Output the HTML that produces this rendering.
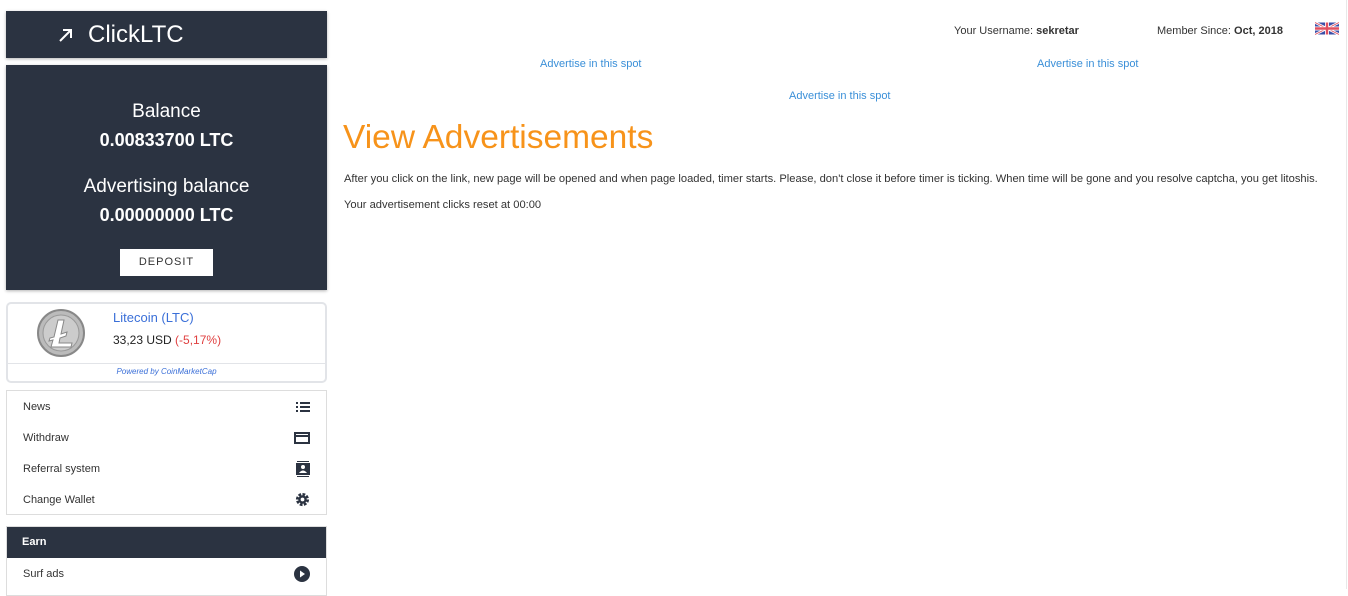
<!DOCTYPE html>
<html><head><meta charset="utf-8"><style>
*{box-sizing:border-box;margin:0;padding:0}
body{width:1348px;height:589px;overflow:hidden;background:#fff;font-family:"Liberation Sans",sans-serif;color:#333;position:relative}
.dark{background:#2b3341;color:#fff;position:absolute;left:6px;width:321px;box-shadow:0 1px 3px rgba(0,0,0,.3)}
.abs{position:absolute}
.menu{position:absolute;left:6px;width:321px;border:1px solid #ddd;background:#fff}
.mi{height:31px;display:flex;align-items:center;justify-content:space-between;padding:0 16px;font-size:11px;color:#333}
a{color:#3a8fd8;text-decoration:none}
.c{position:absolute;left:0;width:321px;text-align:center}
</style></head><body>
<div class="dark" style="top:11px;height:47px">
<svg class="abs" style="left:52px;top:16px" width="16" height="16" viewBox="0 0 16 16"><path d="M2 14L13 3M5 3h8v8" stroke="#fff" stroke-width="2" fill="none"/></svg>
<div class="abs" style="left:82px;top:10px;font-size:24px">ClickLTC</div>
</div>
<div class="dark" style="top:65px;height:225px">
<div class="c" style="top:36px;font-size:19px">Balance</div>
<div class="c" style="top:65px;font-size:18px;font-weight:bold">0.00833700 LTC</div>
<div class="c" style="top:111px;font-size:19px">Advertising balance</div>
<div class="c" style="top:140px;font-size:18px;font-weight:bold">0.00000000 LTC</div>
<div class="abs" style="left:114px;top:184px;width:93px;height:27px;background:#fff;color:#333;font-size:11px;letter-spacing:1px;line-height:27px;text-align:center">DEPOSIT</div>
</div>
<div class="abs" style="left:6px;top:302px;width:321px;height:81px;border:2px solid #e2e4e8;border-radius:5px">
<svg class="abs" style="left:28px;top:4px" width="50" height="50" viewBox="0 0 50 50"><circle cx="25" cy="25" r="23" fill="#bbb" stroke="#888" stroke-width="2"/><circle cx="25" cy="25" r="18" fill="#ccc" stroke="#999"/><path d="M22 12h6l-3 14 6-2-1 4-6 2-1 5h13l-1 4H15l2-7-4 1 1-3 4-1z" fill="#fff" stroke="#888"/></svg>
<div class="abs" style="left:105px;top:6px;font-size:13px;color:#3a6fd8">Litecoin (LTC)</div>
<div class="abs" style="left:105px;top:29px;font-size:12px;color:#222">33,23 USD <span style="color:#e04040">(-5,17%)</span></div>
<div class="abs" style="left:0;top:59px;width:317px;border-top:1px solid #e2e4e8;text-align:center;font-size:8px;font-style:italic;color:#3a6fd8;padding-top:3px">Powered by CoinMarketCap</div>
</div>
<div class="menu" style="top:390px;height:125px">
<div class="mi">News<svg width="14" height="10"><path d="M0 1h2M4 1h10M0 5h2M4 5h10M0 9h2M4 9h10" stroke="#2b3341" stroke-width="2"/></svg></div>
<div class="mi">Withdraw<svg width="16" height="12"><rect x="1" y="1" width="14" height="10" fill="none" stroke="#2b3341" stroke-width="2"/><path d="M1 4h14" stroke="#2b3341" stroke-width="2"/></svg></div>
<div class="mi">Referral system<svg width="14" height="16"><path d="M1 0h12M1 16h12" stroke="#2b3341" stroke-width="2"/><rect x="0" y="2" width="14" height="12" fill="#2b3341"/><circle cx="7" cy="6" r="2" fill="#fff"/><path d="M3 12q4-5 8 0z" fill="#fff"/></svg></div>
<div class="mi">Change Wallet<svg width="15" height="15" viewBox="0 0 16 16"><circle cx="8" cy="8" r="5" fill="none" stroke="#2b3341" stroke-width="4" stroke-dasharray="2.6 1.3"/><circle cx="8" cy="8" r="4.5" fill="#2b3341"/><circle cx="8" cy="8" r="2" fill="#fff"/></svg></div>
</div>
<div class="menu" style="top:526px;height:70px">
<div style="background:#2b3341;color:#fff;font-weight:bold;font-size:11px;height:31px;line-height:31px;padding-left:15px">Earn</div>
<div class="mi">Surf ads<svg width="16" height="16"><circle cx="8" cy="8" r="8" fill="#2b3341"/><path d="M6 4.5l5 3.5-5 3.5z" fill="#fff"/></svg></div>
</div>
<div style="position:absolute;right:1px;top:0;width:1px;height:589px;background:#e8e8e8"></div>
<div class="abs" style="left:954px;top:25px;font-size:11px">Your Username: <b>sekretar</b></div>
<div class="abs" style="left:1157px;top:25px;font-size:11px">Member Since: <b>Oct, 2018</b></div>
<svg class="abs" style="left:1315px;top:21px" width="24" height="15" viewBox="0 0 60 30"><rect width="60" height="30" fill="#3a4fa8"/><path d="M0 0l60 30M60 0L0 30" stroke="#fff" stroke-width="6"/><path d="M0 0l60 30M60 0L0 30" stroke="#e05060" stroke-width="2"/><path d="M30 0v30M0 15h60" stroke="#fff" stroke-width="10"/><path d="M30 0v30M0 15h60" stroke="#e05060" stroke-width="6"/></svg>
<a class="abs" style="left:540px;top:58px;font-size:11px">Advertise in this spot</a>
<a class="abs" style="left:1037px;top:58px;font-size:11px">Advertise in this spot</a>
<a class="abs" style="left:789px;top:90px;font-size:11px">Advertise in this spot</a>
<div class="abs" style="left:343px;top:119px;font-size:33.5px;color:#f7931a">View Advertisements</div>
<div class="abs" style="left:344px;top:173px;font-size:11.15px;white-space:nowrap">After you click on the link, new page will be opened and when page loaded, timer starts. Please, don't close it before timer is ticking. When time will be gone and you resolve captcha, you get litoshis.</div>
<div class="abs" style="left:344px;top:199px;font-size:11.15px">Your advertisement clicks reset at 00:00</div>
</body></html>
